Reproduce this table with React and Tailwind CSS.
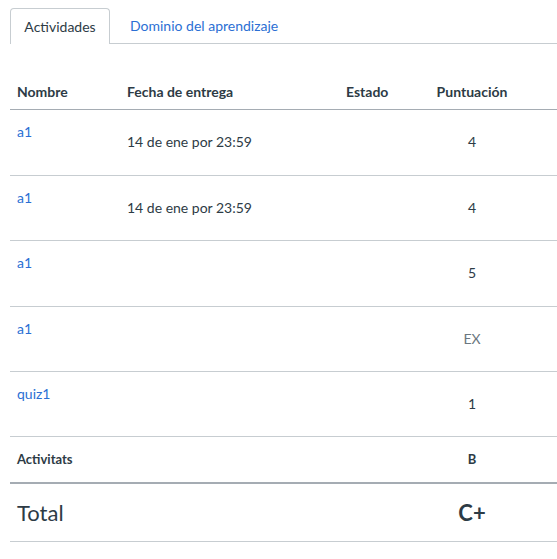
export default function App() {
  const rows = [
    { name: "a1", date: "14 de ene por 23:59", score: "4", h: "h-[66px]" },
    { name: "a1", date: "14 de ene por 23:59", score: "4", h: "h-[65px]" },
    { name: "a1", date: "", score: "5", h: "h-[66px]" },
    { name: "a1", date: "", score: "EX", muted: true, h: "h-[65px]" },
    { name: "quiz1", date: "", score: "1", h: "h-[65px]" },
  ];

  return (
    <div
      className="min-h-screen bg-white text-[#2d3b45]"
      style={{ fontFamily: "Lato, 'Liberation Sans', sans-serif" }}
    >
      <div className="pl-[10px] pt-[8px]">
        <div className="flex items-end border-b border-[#c7cdd1]">
          <div className="-mb-px flex h-[36px] w-[100px] items-center justify-center rounded-t-[4px] border border-b-0 border-[#c7cdd1] bg-white text-[14px]">
            Actividades
          </div>
          <div className="flex h-[35px] items-center px-[20px] text-[14px] text-[#2b6fd4]">
            Dominio del aprendizaje
          </div>
        </div>

        <table className="mt-[26px] w-full table-fixed border-collapse text-[14px]">
          <colgroup>
            <col className="w-[110px]" />
            <col className="w-[219px]" />
            <col className="w-[81px]" />
            <col className="w-[104px]" />
            <col />
          </colgroup>
          <thead>
            <tr className="h-[39px] border-b border-[#a5acb3]">
              <th className="pl-[7px] pt-[4px] text-left font-bold">Nombre</th>
              <th className="pl-[7px] pt-[4px] text-left font-bold">Fecha de entrega</th>
              <th className="pl-[7px] pt-[4px] text-left font-bold">Estado</th>
              <th className="pt-[4px] text-center font-bold">Puntuación</th>
              <th />
            </tr>
          </thead>
          <tbody>
            {rows.map((r, i) => (
              <tr key={i} className={r.h + " border-b border-[#c7cdd1]"}>
                <td className="pl-[7px] pt-[11px] align-top text-[#2b6fd4]">
                  {r.name}
                </td>
                <td className="pb-[1px] pl-[7px] align-middle">{r.date}</td>
                <td />
                <td
                  className={
                    "pb-[1px] text-center align-middle " +
                    (r.muted ? "text-[#6b7780]" : "")
                  }
                >
                  {r.score}
                </td>
                <td />
              </tr>
            ))}
            <tr className="h-[47px] border-b-2 border-[#a5acb3]">
              <td className="pl-[7px] text-[13px] font-bold">Activitats</td>
              <td />
              <td />
              <td className="text-center text-[13px] font-bold">B</td>
              <td />
            </tr>
            <tr className="h-[58px] border-b border-[#c7cdd1]">
              <td className="pl-[7px] text-[22px]">Total</td>
              <td />
              <td />
              <td className="text-center text-[22px] font-bold">C+</td>
              <td />
            </tr>
          </tbody>
        </table>
      </div>
    </div>
  );
}
